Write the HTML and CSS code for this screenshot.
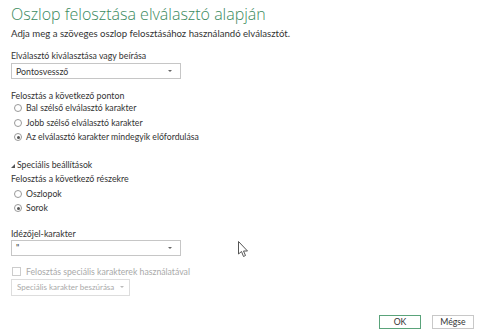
FILE: index.html
```html
<!DOCTYPE html>
<html>
<head>
<meta charset="utf-8">
<link rel="stylesheet" href="styles.css">
</head>
<body>
<div class="dialog">
  <h1 class="title">Oszlop felosztása elválasztó alapján</h1>
  <p class="subtitle">Adja meg a szöveges oszlop felosztásához használandó elválasztót.</p>

  <div class="label first">Elválasztó kiválasztása vagy beírása</div>
  <div class="select"><span>Pontosvessző</span><span class="caret"></span></div>

  <div class="label section">Felosztás a következő ponton</div>
  <div class="radios">
    <div class="radio"><span class="dot"></span>Bal szélső elválasztó karakter</div>
    <div class="radio"><span class="dot"></span>Jobb szélső elválasztó karakter</div>
    <div class="radio"><span class="dot on"></span>Az elválasztó karakter mindegyik előfordulása</div>
  </div>

  <div class="advanced"><span class="tri"></span>Speciális beállítások</div>
  <div class="label parts">Felosztás a következő részekre</div>
  <div class="radios second">
    <div class="radio"><span class="dot"></span>Oszlopok</div>
    <div class="radio"><span class="dot on"></span>Sorok</div>
  </div>

  <div class="label quote">Idézőjel-karakter</div>
  <div class="select"><span>"</span><span class="caret"></span></div>

  <div class="check"><span class="box"></span>Felosztás speciális karakterek használatával</div>
  <div class="insert">Speciális karakter beszúrása <span class="caret light"></span></div>

  <div class="buttons">
    <button class="btn ok">OK</button>
    <button class="btn">Mégse</button>
  </div>

  <svg class="cursor" width="12" height="18" viewBox="0 0 12 18">
    <path d="M0.5 0.5 L0.5 13 L3.5 10.5 L5.5 15.5 L7.5 14.5 L5.5 10 L9.5 10 Z" fill="#fff" stroke="#555" stroke-width="1"/>
  </svg>
</div>
</body>
</html>
```
FILE: styles.css
```css
html, body { margin: 0; padding: 0; background: #fff; }
body { width: 480px; height: 335px; overflow: hidden; font-family: "Lato", "Noto Sans", sans-serif; color: #333; }
.dialog { position: relative; width: 480px; height: 335px; padding: 3px 11px 0 11px; box-sizing: border-box; display: flex; flex-direction: column; align-items: flex-start; }
.title { margin: 0; font-family: "Open Sans", sans-serif; font-weight: 300; font-size: 16px; line-height: 22px; color: #3a8a5e; }
.subtitle { margin: 2px 0 0; font-size: 9.6px; line-height: 14px; color: #333; }
.label { font-size: 8.8px; line-height: 12px; color: #333; }
.label.first { margin-top: 8px; line-height: 14px; }
.label.section { margin-top: 11px; }
.label.parts { margin-top: 2px; }
.label.quote { margin-top: 12px; }
.select { width: 170px; height: 16px; box-sizing: border-box; border: 1px solid #c6c6c6; display: flex; align-items: center; justify-content: space-between; padding: 0 8px 0 4px; font-size: 8.8px; color: #333; }
.caret { width: 0; height: 0; border-left: 2px solid transparent; border-right: 2px solid transparent; border-top: 2px solid #666; }
.caret.light { border-top-color: #bbb; display: inline-block; margin-left: 4px; vertical-align: middle; }
.radios { display: flex; flex-direction: column; margin-top: -1px; }
.radios.second { margin-top: 2px; }
.radio { display: flex; align-items: center; font-size: 8.7px; line-height: 14px; height: 14.5px; padding-left: 3px; }
.dot { width: 6px; height: 6px; border: 1px solid #999; border-radius: 50%; margin-right: 4px; box-sizing: content-box; position: relative; }
.dot.on::after { content: ""; position: absolute; left: 1.5px; top: 1.5px; width: 3px; height: 3px; border-radius: 50%; background: #555; }
.advanced { margin-top: 14px; font-size: 8.7px; line-height: 12px; display: flex; align-items: center; }
.tri { width: 0; height: 0; border-left: 4px solid transparent; border-bottom: 4px solid #555; margin-right: 2px; margin-top: 2px; }
.check { margin-top: 10px; display: flex; align-items: center; font-size: 8.7px; line-height: 12px; color: #aaa; }
.box { width: 7px; height: 7px; border: 1px solid #ccc; margin-left: 1px; margin-right: 5px; }
.insert { margin-top: 1px; height: 17px; box-sizing: border-box; border: 1px solid #ddd; padding: 0 5px; font-size: 8px; line-height: 15px; color: #aaa; }
.buttons { align-self: flex-end; display: flex; gap: 11px; margin-top: auto; margin-bottom: 6px; margin-right: -5px; }
.btn { width: 42px; height: 14px; font-family: inherit; font-size: 8.7px; line-height: 12px; padding: 0; background: #fff; color: #333; border: 1px solid #c8c8c8; }
.btn.ok { border-color: #5aa37a; }
.cursor { position: absolute; left: 238px; top: 241px; }
```
